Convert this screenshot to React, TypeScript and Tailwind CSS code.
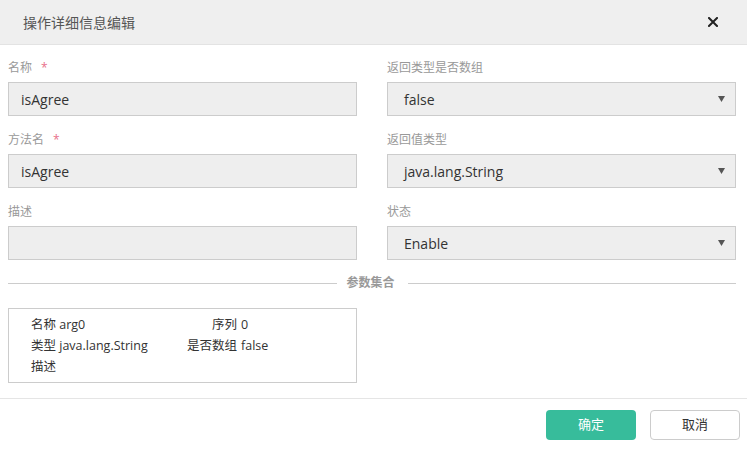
import React from 'react';

const font = { fontFamily: '"Open Sans", "Noto Sans CJK SC", sans-serif' };

function Label({ text, required }: { text: string; required?: boolean }) {
  return (
    <div className="h-[20px] leading-[20px] text-[12px] text-[#999] mb-[4px] flex items-center">
      <span>{text}</span>
      {required && <span className="ml-[9px] text-[#e8708a] text-[12px]">*</span>}
    </div>
  );
}

function TextInput({ value }: { value: string }) {
  return (
    <div className="h-[34px] border border-[#cccccc] bg-[#eeeeee] pl-[12px] flex items-center text-[14px] text-[#333]">
      {value}
    </div>
  );
}

function SelectBox({ value }: { value: string }) {
  return (
    <div className="h-[34px] border border-[#cccccc] bg-[#eeeeee] pl-[16px] pr-[10px] flex items-center justify-between text-[14px] text-[#333]">
      <span>{value}</span>
      <svg width="7" height="6" viewBox="0 0 7 6">
        <polygon points="0,0 7,0 3.5,6" fill="#555" />
      </svg>
    </div>
  );
}

function Field({ label, required, children }: { label: string; required?: boolean; children: React.ReactNode }) {
  return (
    <div className="mb-[14px]">
      <Label text={label} required={required} />
      {children}
    </div>
  );
}

export default function App() {
  return (
    <div className="w-[747px] h-[454px] bg-white flex flex-col" style={font}>
      {/* header */}
      <div className="h-[45px] bg-[#efefef] border-b border-[#e3e3e3] flex items-center justify-between pl-[23px] pr-[29px]">
        <span className="text-[14px] text-[#555]">操作详细信息编辑</span>
        <svg width="10" height="10" viewBox="0 0 10 10">
          <path d="M1 1 L9 9 M9 1 L1 9" stroke="#222" strokeWidth="2" strokeLinecap="square" />
        </svg>
      </div>

      {/* body */}
      <div className="pl-[8px] pr-[11px] pt-[13px]">
        <div className="grid grid-cols-2 gap-x-[30px]">
          <Field label="名称" required>
            <TextInput value="isAgree" />
          </Field>
          <Field label="返回类型是否数组">
            <SelectBox value="false" />
          </Field>
          <Field label="方法名" required>
            <TextInput value="isAgree" />
          </Field>
          <Field label="返回值类型">
            <SelectBox value="java.lang.String" />
          </Field>
          <Field label="描述">
            <TextInput value="" />
          </Field>
          <Field label="状态">
            <SelectBox value="Enable" />
          </Field>
        </div>

        {/* divider */}
        <div className="flex items-center h-[20px] -mt-[1px] mb-[15px]">
          <div className="flex-1 h-px bg-[#cccccc]" />
          <span className="pl-[10px] pr-[13px] text-[12px] font-semibold text-[#999]">参数集合</span>
          <div className="flex-1 h-px bg-[#cccccc]" />
        </div>

        {/* params */}
        <div className="w-[349px] border border-[#cccccc] pl-[22px] py-[5px] text-[12.5px] text-[#333] leading-[21px]">
          <div className="flex">
            <span className="w-[150px]">名称 arg0</span>
            <span className="w-[56px] text-right">序列</span>
            <span className="ml-[4px]">0</span>
          </div>
          <div className="flex">
            <span className="w-[150px]">类型 java.lang.String</span>
            <span className="w-[56px] text-right">是否数组</span>
            <span className="ml-[4px]">false</span>
          </div>
          <div className="flex">
            <span>描述</span>
          </div>
        </div>
      </div>

      {/* footer */}
      <div className="mt-[15px] border-t border-[#e5e5e5] flex justify-end gap-[14px] pt-[11px] pr-[7px]">
        <button className="w-[90px] h-[30px] rounded-[4px] bg-[#37bc9b] text-white text-[13px]">确定</button>
        <button className="w-[90px] h-[30px] rounded-[4px] border border-[#cccccc] bg-white text-[#333] text-[13px]">取消</button>
      </div>
    </div>
  );
}
